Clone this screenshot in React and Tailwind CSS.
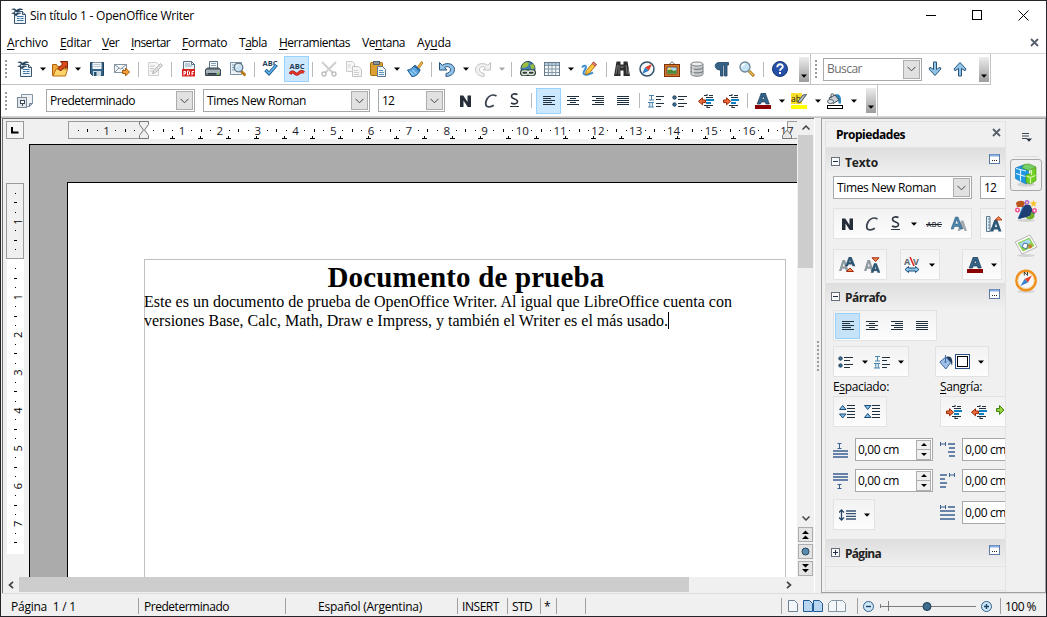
import React, { useLayoutEffect, useRef } from "react";

const UI = "font-['Open_Sans','Noto_Sans',sans-serif] text-[12px] leading-[16px] text-black whitespace-pre";

// Text whose letter spacing is adjusted so that the run is `w` pixels wide.
function T({ w, className = "", children }) {
  const ref = useRef(null);
  useLayoutEffect(() => {
    const el = ref.current;
    el.style.letterSpacing = "0px";
    const n = el.textContent.length;
    el.style.letterSpacing = (w - el.getBoundingClientRect().width) / n + "px";
  }, [w]);
  return (
    <span className="flex shrink-0">
      <span ref={ref} className={`inline-block shrink-0 whitespace-pre ${className}`}>{children}</span>
    </span>
  );
}

const Svg = ({ s = 16, h, children }) => (
  <svg width={s} height={h || s} viewBox={`0 0 ${s} ${h || s}`} className="block shrink-0" fill="none">
    {children}
  </svg>
);

const C = ({ w, children }) => <div className={`flex shrink-0 items-center ${w}`}>{children}</div>;
const Arr = ({ w = "w-3", c = "#000" }) => (
  <C w={w}><Svg s={6} h={4}><path d="M0 0.5h6L3 3.7z" fill={c} /></Svg></C>
);
const Sep = ({ w }) => <C w={w}><div className="h-[15px] w-px bg-[#b9b9b9]" /></C>;
const Grip = ({ w }) => (
  <C w={w}>
    <div className="flex flex-col gap-[2px]">
      {[0, 1, 2, 3, 4].map((i) => <div key={i} className="h-[2px] w-[2px] bg-[#9a9a9a]" />)}
    </div>
  </C>
);
const Drop = () => (
  <div className="flex h-[25px] w-[10px] shrink-0 items-end justify-center bg-linear-to-b from-[#ededed] to-[#9d9d9d] pb-1">
    <Svg s={6} h={4}><path d="M0 0.5h6L3 3.7z" fill="#000" /></Svg>
  </div>
);
const Chevron = () => (
  <div className="flex h-[19px] w-[17px] shrink-0 items-center justify-center border border-[#adadad] bg-[#e1e1e1]">
    <Svg s={9} h={6}><path d="M.5 .8 4.5 4.8 8.5 .8" stroke="#444" /></Svg>
  </div>
);
const Combo = ({ box, text, w, gray }) => (
  <div className={`flex h-[23px] shrink-0 items-center justify-between border border-[#a6a8ab] bg-white pl-[3px] pr-px ${box}`}>
    <T w={w} className={gray ? "text-[#6d6d6d]" : ""}>{text}</T>
    <Chevron />
  </div>
);

/* ---------- icons ---------- */
const NewDoc = () => (
  <Svg>
    <path d="M3.5 3.5h8l3 3v9h-11z" fill="#eef4f8" stroke="#3a566e" />
    <path d="M11.5 3.500v3h3" fill="#c3d4e0" stroke="#3a566e" />
    <path d="M6 8.500h6.500M6 10.500h2.500M9.500 10.500h3M6 12.500h6.500" stroke="#3c78a8" />
    <path d="M0 1.500C2.500-.3 4.500.5 5.500 2 7.500 0 10.500 0 12.500 1.800 10 1.600 7.600 2.500 6 4.800 5 2.800 2.500 1.400 0 1.500z" fill="#27445e" />
    <path d="M0 5.500c2-1.800 3.800-1 4.800.3C6.500 4 9 4.200 10.500 5.600 8.500 5.400 6.600 6.300 5 8.500 4 6.500 2 5.300 0 5.500z" fill="#27445e" />
  </Svg>
);
const Open = () => (
  <Svg>
    <path d="M.5 14.5v-11h4l1 2h8v9z" fill="#f3a93b" stroke="#a95f0c" />
    <path d="M1 15l3-7h11.5l-2 7z" fill="#fbd36b" stroke="#b96e10" />
    <path d="M8.500 .5h7v7l-2.500-2-4.500 4.500-2.500-2.500L10.500 3z" fill="#d94a1c" stroke="#7c2004" />
  </Svg>
);
const Save = () => (
  <Svg>
    <path d="M1.500 1.500h13v13h-11l-2-2z" fill="#33658a" stroke="#1e3f5a" />
    <rect x="3.500" y="1.500" width="9" height="6.500" fill="#f4f8fa" />
    <path d="M4.500 3.500h7M4.500 5.500h7" stroke="#b7c8d4" />
    <rect x="4" y="10" width="8" height="5" fill="#c9d7e0" /><rect x="5" y="11" width="2.500" height="4" fill="#24506f" />
  </Svg>
);
const Mail = () => (
  <Svg>
    <rect x=".5" y="3.5" width="12" height="8" fill="#f5f7f8" stroke="#8496a2" />
    <path d="M1 4l5.500 4L12 4M1 11l4-4M12 11 8 7" stroke="#8496a2" />
    <path d="M8.500 9.500h3v-2.500l4 4-4 4v-2.500h-3z" fill="#f2a033" stroke="#a8590b" />
  </Svg>
);
const Edit = () => (
  <Svg>
    <path d="M1.500 1.500h8l2 2v11h-10z" fill="#f6f6f6" stroke="#cfcfcf" />
    <path d="M3 5h5M3 7.500h4M3 10h3" stroke="#c8c8c8" />
    <path d="M13.500 2.500l2 2-7 7-3 1.200 1-3.200z" fill="#dedede" stroke="#b8b8b8" />
  </Svg>
);
const Pdf = () => (
  <Svg>
    <path d="M2.500 .5h8l3 3v8h-11z" fill="#eef3f6" stroke="#5a7184" />
    <path d="M10.500 .5v3h3" stroke="#5a7184" /><path d="M4 3h5M4 5h7" stroke="#8ba7bd" />
    <rect x="1" y="8" width="13" height="7.5" fill="#d8201d" />
    <path d="M3 14.500v-4.500M3 10.500h1.500v2H3M6.500 10v4h1.200l.8-.8v-2.400l-.8-.8zM11 14.500v-4M11 10.500h2M11 12.500h1.500" stroke="#fff" />
  </Svg>
);
const Print = () => (
  <Svg>
    <path d="M4.500 7.500V.5h8v7" fill="#f7fafc" stroke="#5b7283" />
    <path d="M6 2.500h5M6 4.500h5" stroke="#87a3b8" />
    <path d="M.5 8.500l2-1.500h11l2 1.500v6h-15z" fill="#6c7a85" stroke="#3b4750" />
    <rect x="1" y="9" width="14" height="3" fill="#a8b3ba" /><rect x="3" y="12" width="8" height="1.500" fill="#2d373e" />
    <rect x="12" y="12" width="2" height="1.500" fill="#6ecb3c" />
  </Svg>
);
const Preview = () => (
  <Svg>
    <path d="M.5 1.500h11v12H.5z" fill="#edf2f5" stroke="#7b93a5" />
    <path d="M2 4h3M2 6.500h2M2 9h2" stroke="#7fa0b8" />
    <path d="M11 10l4.500 4.500" stroke="#b97a16" strokeWidth="2.800" />
    <circle cx="8.500" cy="6.500" r="4.300" fill="#c9e0f1" stroke="#5f7485" strokeWidth="1.300" />
    <path d="M6.500 6a2 2 0 0 1 2-2" stroke="#fff" />
  </Svg>
);
const Abc = ({ y = 7 }) => (
  <text x="0.5" y={y} fontSize="7" fontWeight="700" fill="#1f3d55" textLength="15" lengthAdjust="spacingAndGlyphs" fontFamily="Open Sans, sans-serif">ABC</text>
);
const Spell = () => (
  <svg width="17" height="20" viewBox="0 0 17 20" className="mb-1 block shrink-0" fill="none">
    <Abc y={9} />
    <path d="M3.500 13l3.500 3.500 7.500-8.500" stroke="#1d5e96" strokeWidth="3.400" /><path d="M4 13.500l3 2.800 7-7.800" stroke="#62b6ef" strokeWidth="1.600" />
  </svg>
);
const Auto = () => (
  <Svg>
    <Abc y={8} />
    <path d="M1 13q2-3.500 4.500-1t4.500 0 5-.5" stroke="#a81414" strokeWidth="3" /><path d="M1 13q2-3.500 4.500-1t4.500 0 5-.5" stroke="#f03a2a" strokeWidth="1.500" />
  </Svg>
);
const Cut = () => (
  <Svg>
    <path d="M1 1l11 11M15 1L4 12" stroke="#cfcfcf" strokeWidth="2" />
    <circle cx="3" cy="13" r="2" stroke="#bdbdbd" strokeWidth="1.400" /><circle cx="13" cy="13" r="2" stroke="#bdbdbd" strokeWidth="1.400" />
  </Svg>
);
const Copy = () => (
  <Svg>
    <path d="M.5 .5h6l2 2v8h-8z" fill="#f6f6f6" stroke="#cacaca" /><path d="M2 4h3M2 6h2" stroke="#d0d0d0" />
    <path d="M6.500 5.500h6l3 3v7h-9z" fill="#f6f6f6" stroke="#c4c4c4" /><path d="M8 9.500h4M8 11.500h5M8 13.500h5" stroke="#cfcfcf" />
  </Svg>
);
const Paste = () => (
  <Svg>
    <rect x=".5" y="1.500" width="12" height="13" rx="1" fill="#dca032" stroke="#a36a10" />
    <rect x="3.500" y=".5" width="6" height="3" fill="#8c959c" stroke="#56616a" />
    <path d="M7.500 5.500h5l3 3v7h-8z" fill="#eef4f8" stroke="#5b7890" /><path d="M9 9.500h4M9 11.500h5M9 13.500h5" stroke="#5e97c2" />
  </Svg>
);
const Brush = () => (
  <Svg>
    <path d="M10 6.500l4.500-6 1.500 1.300-4 6z" fill="#f1b64b" stroke="#a5690e" strokeWidth=".8" />
    <path d="M.5 9c3 0 5-2.500 7-4.500l5.200 5C11.500 13 9 15.500 5 15.700z" fill="#58a6e2" stroke="#1c588c" />
    <path d="M3 10.500l4 4M5.500 9l4 4" stroke="#d3ebfb" />
    <path d="M7.500 4.500l5.500 5.300" stroke="#2c6494" strokeWidth="2" />
  </Svg>
);
const Undo = ({ a = "#2a5378", b = "#8fc3ea" }) => (
  <Svg>
    <path d="M.5 1.500v7.500h7.500L5.500 6.500c3-1.800 6.200-.5 6 2.300-.2 2.300-2 3.200-4.500 3.700v3c5-.3 8.300-2.700 8.500-7C15.500 3.500 9 .5 3.300 4.300z" fill={b} stroke={a} />
  </Svg>
);
const Redo = () => <div className="-scale-x-100"><Undo a="#c2c2c2" b="#f1f1f1" /></div>;
const Globe = () => (
  <Svg>
    <circle cx="8" cy="7.500" r="7" fill="#3f7fae" stroke="#27455c" />
    <path d="M3 3c2-2 5-2 6-1L8 5 5 6.500 1.500 7zM10 4l3.500-1 1.300 4-3 1.500z" fill="#9dbf3c" />
    <rect x="0" y="8.500" width="16" height="6.500" rx="3" fill="#2d4038" />
    <rect x="1.800" y="10" width="6" height="3.500" rx="1.700" stroke="#e4eadf" strokeWidth="1.300" /><rect x="8.200" y="10" width="6" height="3.500" rx="1.700" stroke="#e4eadf" strokeWidth="1.300" />
  </Svg>
);
const TableI = () => (
  <Svg>
    <rect x=".5" y="1.500" width="15" height="13" fill="#f3f6f8" stroke="#667b8c" />
    <rect x="1" y="2" width="14" height="2" fill="#b4c9d9" />
    <path d="M1 4.500h14M1 8h14M1 11.500h14M4.500 2v12M8 2v12M11.700 2v12" stroke="#8499a8" />
  </Svg>
);
const Pencil = () => (
  <Svg>
    <path d="M1 6.500c2-3 5-2 3.500 1S1 12.500 4 13.500s5-.5 8-2" stroke="#3d8fd2" strokeWidth="2" />
    <path d="M12.500 1l3 2.500-7.500 9-3.500 1 .7-3.700z" fill="#f9c53c" stroke="#a56a12" strokeWidth=".9" />
    <path d="M12.500 1l3 2.500-1.300 1.700-3-2.500z" fill="#e07a7a" stroke="#a03c3c" strokeWidth=".6" />
  </Svg>
);
const Binoc = () => (
  <Svg>
    <path d="M2.500 .5h4v3h3v-3h4L16 15H9.500V9.500h-3V15H0z" fill="#2c2c2c" />
    <path d="M3.500 4L2 13M12 4l1 9M5 4v9M14 8l.7 5" stroke="#777" /><path d="M6.500 6h3" stroke="#999" />
  </Svg>
);
const Compass = () => (
  <Svg>
    <circle cx="8" cy="8" r="7" fill="#f4f7f9" stroke="#35516a" strokeWidth="1.500" />
    <path d="M13 3L9.800 9.800 6.200 6.200z" fill="#e03a22" /><path d="M3 13l3.200-6.800 3.600 3.600z" fill="#2f7fc9" />
  </Svg>
);
const Gallery = () => (
  <Svg>
    <path d="M5 3.500L8 .8l3 2.700" stroke="#6b6b6b" />
    <rect x=".5" y="3.500" width="15" height="12" fill="#d2772c" stroke="#7c3509" />
    <rect x="3" y="6" width="10" height="7" fill="#a9d6ee" stroke="#70370f" strokeWidth=".8" />
    <path d="M3.500 12.500v-3l3-1.500 3 2 3-1v3.500z" fill="#4f8a2a" /><rect x="4" y="7" width="3" height="1.600" fill="#f4e36c" />
  </Svg>
);
const Db = () => (
  <Svg>
    <path d="M2 3v10c0 3 12 3 12 0V3z" fill="#c6c9cb" stroke="#7d8386" /><ellipse cx="8" cy="3" rx="6" ry="2" fill="#eceeef" stroke="#7d8386" />
    <path d="M2 6.500c0 2.500 12 2.500 12 0M2 10c0 2.500 12 2.500 12 0" stroke="#6c7275" /><path d="M4 6v8" stroke="#f1f1f1" />
  </Svg>
);
const Pil = () => (
  <Svg>
    <path d="M5 1.500h9.500V4H13v11h-2.500V4H9v11H6.500V9C-.5 9 0 1.500 5 1.500z" fill="#356286" stroke="#1d4160" strokeWidth=".8" />
  </Svg>
);
const Mag = () => (
  <Svg>
    <path d="M10 10l5 5" stroke="#9a6a14" strokeWidth="3" /><path d="M10.500 10.500l4 4" stroke="#f0bd4a" strokeWidth="1.400" />
    <circle cx="6" cy="6" r="5" fill="#c5e3f6" stroke="#6f8797" strokeWidth="1.300" /><path d="M3 6a3 3 0 0 1 3-3" stroke="#fff" strokeWidth="1.500" />
  </Svg>
);
const Help = () => (
  <Svg>
    <circle cx="8" cy="8" r="7.500" fill="#2450a8" stroke="#183573" />
    <path d="M5.300 6.200c0-4 5.700-3.500 5.500-.4C10.700 7.600 8 7.500 8 9.700M8 11v2" stroke="#fff" strokeWidth="2" />
  </Svg>
);
const ArrowI = ({ up }) => (
  <div className={up ? "rotate-180" : ""}>
    <Svg><path d="M6.500 1h3v7.500l3.500-2.300 1 1.800-6 6.500L2 8l1-1.800 3.500 2.300z" fill="#8fc4e8" stroke="#2a5578" /></Svg>
  </div>
);
const StyleI = () => (
  <Svg>
    <path d="M4.500 1.500h11v9l-3 3h-8z" fill="#eef2f5" stroke="#8496a6" /><path d="M15.500 10.500h-3v3z" fill="#bacad6" stroke="#71869a" />
    <rect x=".5" y="4.500" width="9" height="10" fill="#dfe5ea" stroke="#7b8a97" />
    <rect x="3.500" y="7.500" width="4" height="3" fill="#fff" stroke="#3b4955" /><path d="M5.500 10v3" stroke="#3b4955" />
  </Svg>
);
const Bold = () => <Svg><path d="M3 14V2.500h3.300l4.200 6.500V2.500H14V14h-3.300L6.500 7.500V14z" fill="#252d38" /></Svg>;
const Ital = () => <Svg><path d="M14.500 3C11.500 1.300 7.500 2 5 6c-2.500 4.500-1.500 8 2.500 7.800 1.600 0 3-.7 4.300-1.600" stroke="#3a4350" strokeWidth="1.800" /></Svg>;
const Under = () => (
  <Svg>
    <path d="M11.500 1.500C9 .3 5.500 .8 5.500 3.300c0 3.200 6 2.200 6 5.200 0 2.500-3.500 3-6.500 1.500" stroke="#2c3541" strokeWidth="1.600" />
    <path d="M4 13.500h9" stroke="#2c3541" />
  </Svg>
);
const alignRows = {
  l: [[0, 12], [0, 8], [0, 12], [0, 9], [0, 12]],
  c: [[0, 12], [3, 9], [0, 12], [3, 9], [0, 12]],
  r: [[0, 12], [4, 12], [0, 12], [3, 12], [0, 12]],
  j: [[0, 12], [0, 12], [0, 12], [0, 12], [0, 12]],
};
const Align = ({ k }) => (
  <Svg s={12} h={10}>{alignRows[k].map(([a, b], i) => <path key={i} d={`M${a} ${i * 2 + 0.5}H${b}`} stroke="#20303c" />)}</Svg>
);
const NumL = () => (
  <Svg>
    <path d="M1 2.500h5M3.500 3v4M1 7h5M0 9.500h6M1.800 10v4M4.300 10v4M0 14h6" stroke="#4b84ad" />
    <path d="M8 3.500h8M8 6.500h5M8 10.500h8M8 13.500h5" stroke="#20303c" />
  </Svg>
);
const BulL = () => (
  <Svg>
    <circle cx="2.500" cy="4.500" r="1.700" fill="#3c7199" stroke="#1d3e58" /><circle cx="2.500" cy="11.500" r="1.700" fill="#3c7199" stroke="#1d3e58" />
    <path d="M6 3.500h9M6 6.500h6M6 10.500h9M6 13.500h6" stroke="#20303c" />
  </Svg>
);
const Ind = ({ left }) => (
  <Svg>
    <path d="M6 2.500h3M11 2.500h4M8 4.500h7M6 12.500h9M9 14.500h3M9 1v2M9 13v2" stroke="#20303c" />
    <path d="M8 7h8M8 10h5" stroke="#0e7fc0" strokeWidth="2" />
    <g transform={left ? "translate(8 0) scale(-1 1)" : ""}>
      <path d="M.5 7h3V4.800L7.500 8.300l-4 3.500V9.600h-3z" fill="#ef6b35" stroke="#96280b" />
    </g>
  </Svg>
);
const FontColor = () => (
  <Svg>
    <path d="M6.300 0h4l4 11h-3.300l-.7-2H6.200l-.7 2H2.200zM6.900 6.500h2.700L8.300 2.800z" fill="#33658b" stroke="#1c3a52" strokeWidth=".7" />
    <rect x="0" y="12" width="16" height="4" fill="#8b0000" />
  </Svg>
);
const Hilite = () => (
  <Svg>
    <rect width="11" height="11" fill="#f7df2a" />
    <text x="0" y="9" fontSize="8.500" fill="#111" fontFamily="Open Sans, sans-serif">ab</text>
    <path d="M15.500 1.500L10 9l-3 1 .5-2.500L12 2z" fill="#b0b8bd" stroke="#4c5860" /><path d="M6 9.500l3 .5-2 1.500z" fill="#e2aa23" />
    <rect y="12" width="16" height="4" fill="#ff0" />
  </Svg>
);
const Fill = () => (
  <Svg>
    <path d="M8 1.500c4.500-1 6.500 1 6 9h-2.500c0-4-1-5-3-5z" fill="#2c84b8" />
    <path d="M2 5l6-3 4 5-6 3.500z" fill="#c8d0d5" stroke="#3d4a54" /><path d="M4 5V1.500C5 0 7 1 7 2.500" stroke="#3d4a54" /><ellipse cx="3.500" cy="8.500" rx="3" ry="2" fill="#dbe2e6" stroke="#55626b" />
    <rect x=".5" y="12.500" width="15" height="3" fill="#fff" stroke="#000" />
  </Svg>
);
const Bucket = () => (
  <Svg>
    <path d="M6.500 3c5-2 8 1 6.500 9-.5-3-2-4.500-4-5z" fill="#1f3b58" />
    <path d="M.8 8l6-5 5 5.500-5 6.500z" fill="#9fc0e8" stroke="#3f6ca3" /><path d="M6.500 8V1" stroke="#3f6ca3" /><circle cx="6.500" cy="8" r="1" fill="#3f6ca3" />
  </Svg>
);
const TwoA = ({ red }) => (
  <Svg>
    <path d="M0 14L3.500 3H6l3.500 11H7l-.7-2.300H3.200L2.500 14zM3.800 9.600h2L4.800 6z" fill="#8f9aa1" />
    {red === "up" && <><path d="M6.500 9L10 0h2.300L16 9h-2.300l-.6-1.800h-3.700L8.800 9zM10 5.500h2L11 2.500z" fill="#2d5877" stroke="#1c3a52" strokeWidth=".4" /><path d="M7.500 14.500L11 11l3.500 3.500z" fill="#f08a4a" stroke="#a6290b" /></>}
    {red === "dn" && <><path d="M7 15.500l3.200-9h2.300l3.500 9h-2.300l-.6-1.800h-3.200l-.6 1.800zM10.500 12h2l-1-3z" fill="#2d5877" stroke="#1c3a52" strokeWidth=".4" /><path d="M8 .8h7L11.500 4.500z" fill="#f08a4a" stroke="#a6290b" /></>}
  </Svg>
);
const Shadow = () => (
  <Svg>
    <path d="M6.500 15L10 4.500h2.500L16 15h-2.500l-.7-2h-3L9 15z" fill="#a5adb2" />
    <path d="M0 13L4.500 1H7l4.500 12H9L8.300 10.500H3.200L2.500 13zM4 8h3.500L5.700 3.500z" fill="#4a86ad" stroke="#265374" strokeWidth=".5" />
  </Svg>
);
const Strike = () => (
  <Svg><text x="0.5" y="11" fontSize="7" fontWeight="600" fill="#3a444d" textLength="15" lengthAdjust="spacingAndGlyphs" fontFamily="Open Sans, sans-serif">ABC</text><path d="M0 8.500h16" stroke="#222" /></Svg>
);
const RulerA = () => (
  <Svg>
    <path d="M.5 .5h3.500v15H.5z" fill="#e3eef6" stroke="#5a7b94" /><path d="M2 3h2M2 6h2M2 9h2M2 12h2" stroke="#5a7b94" />
    <path d="M4 15.500L8.300 4h3L15.500 15.500h-3l-.6-2H8l-.7 2zM8.900 11h2.200L10 7.500z" fill="#2d5877" /><path d="M9 4L12.500 .5 16 4z" fill="#f08a4a" stroke="#a6290b" strokeWidth=".8" />
  </Svg>
);
const Kern = () => (
  <Svg>
    <text x="0" y="8" fontSize="9" fontWeight="700" fill="#59666f" fontFamily="Open Sans, sans-serif">A</text><text x="9" y="8" fontSize="9" fontWeight="700" fill="#59666f" fontFamily="Open Sans, sans-serif">V</text>
    <path d="M6 0l4 9" stroke="#d22" strokeWidth="1.500" />
    <path d="M1 12.500L4.500 9.500V11h7V9.500l3.500 3-3.500 3V14h-7v1.500z" fill="#8cc4ea" stroke="#1d4e78" />
  </Svg>
);
const ParaSp = ({ inn }) => (
  <Svg>
    <path d="M8 1.500h8M8 4.500h8M8 7.500h8M8 10.500h8M8 13.500h8" stroke="#20303c" />
    {inn ? <path d="M.5 1.500h6.500L3.700 5.500zM.5 13.500h6.500L3.700 9.500z" fill="#7fbce8" stroke="#1d4e78" /> : <path d="M.5 5.500h6.500L3.700 1.500zM.5 10h6.500L3.700 14z" fill="#7fbce8" stroke="#1d4e78" />}
  </Svg>
);
const GreenA = () => <Svg s={9} h={16}><path d="M.5 4.500h3v-3L8 6l-4.500 4.500v-3h-3z" fill="#9bd13c" stroke="#3c8512" /></Svg>;
const SpTop = () => <Svg><path d="M4.500 1.500h4M6.500 2v5M4.500 6.500h4" stroke="#3a5f91" /><path d="M0 9h15M0 12h15M0 15h15" stroke="#3a5f91" strokeWidth="1.600" /></Svg>;
const SpBot = () => <Svg><path d="M4.500 11.500h4M6.500 11v5M4.500 15.500h4" stroke="#3a5f91" /><path d="M0 1h15M0 4h15M0 7h15" stroke="#3a5f91" strokeWidth="1.600" /></Svg>;
const IndL = () => <Svg><path d="M.5 0v4M5.500 0v4M.5 2h5" stroke="#3a5f91" /><path d="M8 2h7M9 6h6M8 10h7M9 14h6" stroke="#3a5f91" strokeWidth="1.700" /></Svg>;
const IndR = () => <Svg><path d="M9.500 0v4M14.500 0v4M9.500 2h5" stroke="#3a5f91" /><path d="M0 2h7M0 6h5M0 10h7M0 14h6" stroke="#3a5f91" strokeWidth="1.700" /></Svg>;
const IndF = () => <Svg><path d="M.5 0v4M5.500 0v4M.5 2h5" stroke="#3a5f91" /><path d="M8 2h7M0 6h15M0 10h15M0 14h15" stroke="#3a5f91" strokeWidth="1.700" /></Svg>;
const LineSp = () => <Svg s={17} h={12}><path d="M2.500 1v10M0 3.500L2.500 1 5 3.500M0 8.500L2.500 11 5 8.500" stroke="#27486b" strokeWidth="1.300" /><path d="M7 2h10M7 4.700h10M7 7.400h10M7 10h10" stroke="#3a5374" strokeWidth="1.300" /></Svg>;
const CloseX = () => <Svg s={9}><path d="M1 1l7 7M8 1L1 8" stroke="#55606a" strokeWidth="1.800" /></Svg>;

/* ---------- toolbars ---------- */
const menus = [
  ["A", "rchivo", 41, "w-[53px]"], ["E", "ditar", 31, "w-[42px]"], ["V", "er", 17, "w-[29px]"], ["I", "nsertar", 39, "w-[51px]"],
  ["F", "ormato", 45, "w-[57px]"], ["T", "_abla", 28, "w-[40px]"], ["H", "erramientas", 71, "w-[83px]"], ["Ve", "_ntana", 43, "w-[55px]"], ["Ay", "_uda", 34, "w-[40px]"],
];
const MenuLabel = ({ a, b }) => {
  const i = b.indexOf("_");
  if (i < 0) return <><u className="underline-offset-2">{a}</u>{b}</>;
  return <>{a}<u className="underline-offset-2">{b[i + 1]}</u>{b.slice(i + 2)}</>;
};

const Toolbar1 = () => (
  <div className="flex h-[31px] w-[990px] items-center border-b border-r border-[#c3c3c3] pl-1">
    <Grip w="w-3" /><C w="w-[23px]"><NewDoc /></C><Arr /><C w="w-[23px]"><Open /></C><Arr w="w-[14px]" />
    <C w="w-[25px]"><Save /></C><C w="w-6"><Mail /></C><Sep w="w-[9px]" /><C w="w-6"><Edit /></C><Sep w="w-[10px]" />
    <C w="w-6"><Pdf /></C><C w="w-[25px]"><Print /></C><C w="w-6"><Preview /></C><Sep w="w-2" /><C w="w-[22px]"><Spell /></C>
    <C w="w-7"><div className="flex h-[26px] w-[25px] items-center justify-center border border-[#99d1ff] bg-[#cce8ff]"><Auto /></div></C>
    <Sep w="w-[9px]" /><C w="w-[25px]"><Cut /></C><C w="w-6"><Copy /></C><C w="w-6"><Paste /></C><Arr w="w-[13px]" /><C w="w-6"><Brush /></C>
    <Sep w="w-2" /><C w="w-6"><Undo /></C><Arr /><C w="w-6"><Redo /></C><Arr c="#a5a5a5" /><Sep w="w-[9px]" />
    <C w="w-6"><Globe /></C><C w="w-6"><TableI /></C><Arr w="w-[13px]" /><C w="w-[25px]"><Pencil /></C><Sep w="w-2" />
    <C w="w-[25px]"><Binoc /></C><C w="w-[25px]"><Compass /></C><C w="w-[25px]"><Gallery /></C><C w="w-[25px]"><Db /></C><C w="w-[25px]"><Pil /></C><C w="w-6"><Mag /></C>
    <Sep w="w-[9px]" /><C w="w-[27px]"><Help /></C><Drop />
    <div className="ml-px h-[31px] w-[5px] shrink-0 border-l border-[#c3c3c3]" />
    <Grip w="w-2" /><C w="w-[104px]"><Combo box="w-[99px]" text="Buscar" w={35} gray /></C>
    <C w="w-[25px]"><ArrowI /></C><C w="w-[27px]"><ArrowI up /></C><Drop />
  </div>
);

const Toolbar2 = () => (
  <div className="flex h-[31px] w-[877px] items-center border-r border-[#c3c3c3] pl-1">
    <Grip w="w-3" /><C w="w-[29px]"><StyleI /></C>
    <C w="w-[157px]"><Combo box="w-[149px]" text="Predeterminado" w={85} /></C>
    <C w="w-[175px]"><Combo box="w-[167px]" text="Times New Roman" w={99} /></C>
    <C w="w-[79px]"><Combo box="w-[67px]" text="12" w={12} /></C>
    <C w="w-[25px]"><Bold /></C><C w="w-6"><Ital /></C><C w="w-[25px]"><Under /></C><Sep w="w-[5px]" />
    <C w="w-[31px]"><div className="flex h-[26px] w-[25px] items-center justify-center border border-[#99d1ff] bg-[#cce8ff]"><Align k="l" /></div></C>
    <C w="w-[25px]"><Align k="c" /></C><C w="w-[25px]"><Align k="r" /></C><C w="w-[22px]"><Align k="j" /></C><Sep w="w-[9px]" />
    <C w="w-6"><NumL /></C><C w="w-[26px]"><BulL /></C><C w="w-[25px]"><Ind left /></C><C w="w-6"><Ind /></C><Sep w="w-2" />
    <C w="w-6"><FontColor /></C><Arr /><C w="w-6"><Hilite /></C><Arr /><C w="w-6"><Fill /></C><Arr w="w-[15px]" /><Drop />
  </div>
);

/* ---------- rulers ---------- */
const CM = 37.8;
const seq = (n) => Array.from({ length: n }, (_, i) => i);
const HRuler = () => (
  <svg width="729" height="19" viewBox="68 120 729 19" className="block shrink-0">
    <rect x="68" y="122" width="729" height="17" fill="#fff" />
    <rect x="68.5" y="121.5" width="76" height="17" fill="#f0f0f0" stroke="#9a9a9a" />
    <path d="M797 121.5h-9.500v17h9.500" fill="#f0f0f0" stroke="#9a9a9a" />
    {seq(76).map((i) => {
      const q = i - 7;
      if (q % 4 === 0) return null;
      const half = q % 2 === 0;
      return <rect key={i} x={Math.floor(144.3 + (q * CM) / 4)} y={half ? 129 : 130} width="1" height={half ? 3 : 1} fill="#000" />;
    })}
    {[-1, ...seq(17).map((i) => i + 1)].map((n) => (
      <text key={n} x={144.3 + n * CM} y="135" textAnchor="middle" fontSize="11.5" fontFamily="Open Sans, Noto Sans, sans-serif" fill="#1a1a2a">{Math.abs(n)}</text>
    ))}
    {seq(22).map((i) => {
      const x = Math.floor(172.3 + i * 28.05);
      return <path key={i} d={`M${x - 2} 138.5h5M${x + 0.5} 136v2`} stroke="#000" />;
    })}
    <path d="M139.5 121.5h9v3l-4 5.500 4 5.500v3h-9v-3l4-5.500-4-5.500z" fill="#f0f0f0" stroke="#777" />
    <path d="M782.5 138.5h9v-3l-4.500-5.500-4.500 5.500z" fill="#e8e8e8" stroke="#777" />
  </svg>
);
const VRuler = () => (
  <svg width="18" height="371" viewBox="6 183 18 371" className="block">
    <rect x="7" y="259" width="17" height="295" fill="#fff" />
    <rect x="6.5" y="183.5" width="17" height="75" fill="#f0f0f0" stroke="#9a9a9a" />
    {seq(38).map((i) => {
      const q = i - 7;
      if (q % 4 === 0) return null;
      const half = q % 2 === 0;
      return <rect key={i} x={half ? 14 : 15} y={Math.floor(259.3 + (q * CM) / 4)} width={half ? 3 : 1} height="1" fill="#000" />;
    })}
    {[-1, 1, 2, 3, 4, 5, 6, 7].map((n) => (
      <text key={n} transform={`translate(22 ${259.3 + n * CM}) rotate(-90)`} textAnchor="middle" fontSize="11" fontFamily="Open Sans, Noto Sans, sans-serif" fill="#000">{Math.abs(n)}</text>
    ))}
  </svg>
);

/* ---------- sidebar ---------- */
const Header = ({ text, w, plus }) => (
  <div className="flex h-[27px] shrink-0 items-center bg-linear-to-b from-[#dedede] to-[#f0f0f0] pl-[5px]">
    <Svg s={9}><rect x=".5" y=".5" width="8" height="8" fill="#fafafa" stroke="#66707c" /><path d={plus ? "M2 4.500h5M4.500 2v5" : "M2 4.500h5"} stroke="#1e2d48" /></Svg>
    <div className="w-[149px] pl-[5px] pt-[3px]"><T w={w} className="font-bold text-[#222]">{text}</T></div>
    <div className="pb-[6px]"><Svg s={11} h={10}><rect x=".5" y=".5" width="10" height="9" fill="#fff" stroke="#5b7ba6" /><path d="M1 1.500h9" stroke="#86aee0" strokeWidth="2" /><path d="M3 6.500h1M5 6.500h1M7 6.500h1" stroke="#222" /></Svg></div>
  </div>
);
const Box = ({ w, children }) => (
  <div className={`flex h-[31px] shrink-0 items-center border border-[#e2e2e2] bg-linear-to-b from-[#f2f2f2] to-[#fdfdfd] ${w}`}>{children}</div>
);
const Spin = () => (
  <div className="flex h-[23px] w-[78px] shrink-0 items-center justify-between border border-[#a6a8ab] bg-white pl-[2px] pr-px">
    <T w={41}>0,00 cm</T>
    <div className="flex w-[15px] flex-col">
      <div className="flex h-[10px] items-center justify-center border border-[#adadad] bg-[#efefef]"><Svg s={6} h={3}><path d="M0 3h6L3 0z" fill="#000" /></Svg></div>
      <div className="flex h-[10px] items-center justify-center border border-t-0 border-[#adadad] bg-[#efefef]"><Svg s={6} h={3}><path d="M0 0h6L3 3z" fill="#000" /></Svg></div>
    </div>
  </div>
);

const Deck = () => (
  <div className="flex w-[181px] shrink-0 flex-col overflow-hidden border-l border-t border-r border-[#e3e3e3] bg-[#f0f0f0]">
    <div className="flex h-[26px] shrink-0 items-center justify-between border-b border-[#e3e3e3] pl-[10px] pr-1">
      <T w={69} className="font-bold">Propiedades</T>
      <div className="pb-1"><CloseX /></div>
    </div>
    <Header text="Texto" w={33} />
    <div className="flex flex-col pl-[7px]">
      <div className="flex gap-2 pt-px">
        <Combo box="w-[139px]" text="Times New Roman" w={99} />
        <Combo box="w-[60px]" text="12" w={12} />
      </div>
      <div className="mt-[9px] flex gap-2">
        <Box w="w-[139px] pl-[5px]"><C w="w-6"><Bold /></C><C w="w-6"><Ital /></C><C w="w-6"><Under /></C><Arr w="w-[15px]" /><C w="w-[25px]"><Strike /></C><Shadow /></Box>
        <Box w="w-10 pl-[5px]"><RulerA /></Box>
      </div>
      <div className="mt-[10px] flex">
        <Box w="w-[54px] pl-[5px] mr-[13px]"><C w="w-[25px]"><TwoA red="up" /></C><TwoA red="dn" /></Box>
        <Box w="w-10 pl-[3px] mr-[22px]"><C w="w-[25px]"><Kern /></C><Arr /></Box>
        <Box w="w-10 pl-1"><C w="w-6"><FontColor /></C><Arr w="w-[6px]" /></Box>
      </div>
    </div>
    <div className="h-[3px] shrink-0" />
    <Header text="Párrafo" w={41} />
    <div className="flex flex-col pl-[7px]">
      <Box w="w-[104px] pl-px">
        <div className="mr-[6px] flex h-[26px] w-[25px] shrink-0 items-center justify-center border border-[#99d1ff] bg-[#c5e2f7]"><Align k="l" /></div>
        <C w="w-[25px]"><Align k="c" /></C><C w="w-[25px]"><Align k="r" /></C><Align k="j" />
      </Box>
      <div className="mt-[5px] flex">
        <Box w="w-[76px] pl-1 mr-[26px]"><C w="w-6"><BulL /></C><Arr /><C w="w-6"><NumL /></C><Arr w="w-[6px]" /></Box>
        <Box w="w-[54px] pl-[3px]"><Bucket /><C w="w-[23px]"><Svg><rect x=".5" y=".5" width="14" height="14" fill="#fff" stroke="#2c4f86" /><rect x="2.500" y="2.500" width="10" height="10" fill="#fff" stroke="#000" /></Svg></C><Arr w="w-[6px]" /></Box>
      </div>
      <div className="flex h-[19px] items-center pt-px">
        <div className="w-[107px]"><T w={56}>E<u className="underline-offset-2">s</u>paciado:</T></div>
        <T w={42}><u className="underline-offset-2">S</u>angría:</T>
      </div>
      <div className="flex">
        <Box w="w-[54px] pl-[5px] mr-[53px]"><C w="w-[25px]"><ParaSp /></C><ParaSp inn /></Box>
        <Box w="w-[90px] pl-[5px]"><C w="w-[25px]"><Ind /></C><C w="w-[25px]"><Ind left /></C><GreenA /></Box>
      </div>
      <div className="mt-[11px] flex items-center"><C w="w-[22px]"><SpTop /></C><Spin /><C w="w-[29px] pl-[7px]"><IndL /></C><Spin /></div>
      <div className="mt-2 flex items-center"><C w="w-[22px]"><SpBot /></C><Spin /><C w="w-[29px] pl-[7px]"><IndR /></C><Spin /></div>
      <div className="mt-[7px] flex">
        <Box w="w-[42px] pl-[5px] mr-[65px]"><C w="w-[25px]"><LineSp /></C><Arr w="w-[6px]" /></Box>
        <div className="mt-[2px] flex h-[23px] items-center"><C w="w-[22px]"><IndF /></C><Spin /></div>
      </div>
    </div>
    <div className="h-[9px] shrink-0" />
    <Header text="Página" w={36} plus />
    <div className="h-[25px] shrink-0 border-y border-[#e3e3e3]" />
  </div>
);

const Tabs = () => (
  <div className="flex w-10 shrink-0 flex-col items-center">
    <div className="flex h-[35px] w-full shrink-0 items-center justify-center pb-1">
      <Svg s={11} h={10}><path d="M1 1.500h7M1 4h7M1 6.500h5" stroke="#3b4855" /><path d="M5 6.500h6L8 9.700z" fill="#24303c" /></Svg>
    </div>
    <div className="mb-[2px] h-px w-[23px] shrink-0 bg-[#dcdcdc]" />
    <div className="flex h-8 w-8 shrink-0 items-center justify-center rounded-[3px] border border-[#a9a9a9]">
      <Svg s={24}>
        <ellipse cx="12" cy="21.500" rx="9" ry="2" fill="#d3d3d3" />
        <path d="M1.500 5l8-3 5 2v14l-2 3-6-2.500-5-3z" fill="#1f97e0" stroke="#0b6fb4" strokeWidth=".6" />
        <path d="M2 10.500l9.500 3M6.500 6.500v12M2 5.500l10 2.500" stroke="#d6effc" strokeWidth="1.200" />
        <path d="M10 1.500l5-.5 7 3-7.500 3.500L8 5z" fill="#79d06a" stroke="#3f930c" strokeWidth=".6" />
        <path d="M12 12l5-1.500V7l5-2.500v13L16.500 21 12 19.500z" fill="#6fd022" stroke="#3f930c" strokeWidth=".6" />
        <path d="M12.500 13l4 1.500v6M16.500 14.500l5-2M17.500 7v5" stroke="#d5f7a8" strokeWidth="1.200" />
      </Svg>
    </div>
    <div className="mt-2 flex flex-col gap-[11px]">
      <Svg s={24}>
        <ellipse cx="12" cy="21.500" rx="9" ry="1.500" fill="#d3d3d3" />
        <path d="M9 6l7 7-10 7-2-1z" fill="#2f76bd" /><path d="M4 20l9-2 8-3-5-9-5-.5z" fill="#1c3f74" />
        <path d="M2 4c2-3 8-3 9 0l-2 4H3z" fill="#b9561c" /><path d="M17 13c4 1 5 5 1 7-3 1-6 0-6-2 3 0 5-1 5-5z" fill="#72ad2a" />
        <path d="M19.500 1l1 2.300 2.500.2-1.800 1.800.6 2.500-2.300-1.300L17.200 8l.6-2.700L16 3.500l2.500-.2z" fill="#f7c52d" />
        <circle cx="13" cy="3.500" r="2.400" fill="#b067df" /><circle cx="3.500" cy="11" r="2.500" fill="#ef5796" /><circle cx="20.500" cy="11.500" r="2.500" fill="#ef5796" /><circle cx="13" cy="3.500" r=".9" fill="#ffe76b" /><circle cx="3.500" cy="11" r=".9" fill="#fff" /><circle cx="20.500" cy="11.500" r=".9" fill="#fff" />
      </Svg>
      <Svg s={24}>
        <ellipse cx="12" cy="21.500" rx="9" ry="1.500" fill="#d3d3d3" />
        <path d="M1 8L16 1l7 12L8 20z" fill="#fff" stroke="#b5b5b5" /><path d="M3.500 9l12-5.500L20.500 12 9 17.500z" fill="#8bcf4a" />
        <path d="M5 9.500l10-4.500 2 3.500-9.500 4.500z" fill="#a9dbf5" /><path d="M10 9l4 1-1.500 5-4.500-2z" fill="#fff" stroke="#4576a2" strokeWidth="1" /><circle cx="16" cy="12.500" r="2" fill="#ca7b2d" />
      </Svg>
      <Svg s={24}>
        <ellipse cx="12" cy="22.500" rx="9" ry="1.500" fill="#d3d3d3" />
        <circle cx="12" cy="11.500" r="9.700" fill="#f6f8fa" stroke="#ef8f1c" strokeWidth="2.400" /><circle cx="12" cy="11.500" r="8" stroke="#f8cf8a" strokeWidth=".8" />
        <path d="M18 6.500L14 13.500 10.500 10z" fill="#e2452c" /><path d="M6.500 17L10.500 10l3.500 3.500z" fill="#3a82cc" /><path d="M10.300 6.500V3l3.200 3.500V3" stroke="#333" strokeWidth=".9" />
      </Svg>
    </div>
  </div>
);

/* ---------- status bar ---------- */
const SSep = ({ w }) => <C w={w}><div className="h-4 w-px bg-[#a0a0a0]" /></C>;
const Page = ({ on }) => <path d="M.5 .5h6l3 3v8h-9z" fill={on ? "#b8d5ef" : "#f4f7f9"} stroke={on ? "#205a97" : "#6c8193"} />;
const ZoomB = ({ plus }) => <Svg s={11}><circle cx="5.500" cy="5.500" r="5" fill="#cfe6f6" stroke="#2f618c" /><path d={plus ? "M3 5.500h5M5.500 3v5" : "M3 5.500h5"} stroke="#1b456b" strokeWidth="1.400" /></Svg>;

const Status = () => (
  <div className="flex h-[22px] shrink-0 items-center bg-[#f0f0f0] pl-[10px] pt-[2px]">
    <C w="w-[127px] pt-px"><T w={65}>Página  1 / 1</T></C><SSep w="w-[6px]" />
    <C w="w-[141px] pt-px"><T w={85}>Predeterminado</T></C><SSep w="w-[33px]" />
    <C w="w-[139px] pt-px"><T w={104}>Español (Argentina)</T></C><SSep w="w-[5px]" />
    <C w="w-[45px] pt-px"><T w={37}>INSERT</T></C><SSep w="w-[5px]" />
    <C w="w-7 pt-px"><T w={20}>STD</T></C><SSep w="w-1" />
    <C w="w-[12px] pt-px"><T w={5}>*</T></C><SSep w="w-[29px]" /><SSep w="w-[196px]" /><SSep w="w-[7px]" />
    <C w="w-[15px]"><Svg s={10} h={12}><Page /></Svg></C>
    <C w="w-[25px]"><Svg s={10} h={12}><Page on /></Svg><Svg s={10} h={12}><Page on /></Svg></C>
    <C w="w-[29px]"><Svg s={18} h={12}><path d="M.5 11.500v-8l3-3h5v11zM8.500 .5h6l3 3v8h-9z" fill="#f4f7f9" stroke="#8496a2" /></Svg></C>
    <SSep w="w-[6px]" /><C w="w-[17px]"><ZoomB /></C>
    <C w="w-[101px]"><Svg s={98} h={13}><path d="M.5 4v4M0 6.500h96M8.500 1v10" stroke="#7c7c7c" /><circle cx="47" cy="6.500" r="4" fill="#3e6d8e" stroke="#1e3b50" /></Svg></C>
    <C w="w-[19px]"><ZoomB plus /></C><SSep w="w-[5px]" /><div className="pt-px"><T w={31}>100 %</T></div>
  </div>
);

const NavBtn = ({ children }) => <div className="flex h-[15px] w-[15px] items-center justify-center border border-[#adadad] bg-[#e4e4e4]">{children}</div>;

export default function App() {
  return (
    <div className={`flex h-[617px] w-[1047px] flex-col overflow-hidden border border-[#24242a] bg-white ${UI}`}>
      <div className="flex h-[29px] shrink-0 items-center justify-between pl-[10px] pr-[17px]">
        <div className="flex items-center gap-[3px]"><NewDoc /><T w={164}>Sin título 1 - OpenOffice Writer</T></div>
        <div className="flex items-center gap-[35px]">
          <Svg s={11}><path d="M0 5.500h10" stroke="#000" /></Svg>
          <Svg s={11}><rect x=".5" y=".5" width="9" height="9" stroke="#000" /></Svg>
          <Svg s={11}><path d="M.5 .5l10 10M10.500 .5l-10 10" stroke="#000" /></Svg>
        </div>
      </div>
      <div className="flex h-6 shrink-0 items-center border-b border-[#d8d8d8] pl-[6px] pr-[7px] pt-[2px]">
        {menus.map(([a, b, w, c]) => <C key={a} w={c}><T w={w}><MenuLabel a={a} b={b} /></T></C>)}
        <div className="ml-auto pb-px"><CloseX /></div>
      </div>
      <Toolbar1 />
      <Toolbar2 />
      <div className="h-[2px] shrink-0 border-t border-[#d6d6d6] bg-[#c3c3c3]" />
      <div className="flex h-[476px] shrink-0 border-b border-[#dcdcdc] bg-[#f0f0f0] pl-px">
        <div className="flex w-[812px] shrink-0 flex-col border-l border-t border-[#6f6f6f]">
          <div className="flex h-[458px] shrink-0">
            <div className="flex w-[794px] shrink-0 flex-col">
              <div className="flex h-[25px] shrink-0 items-start pl-[3px] pt-px">
                <div className="mt-px flex h-[18px] w-[18px] items-center justify-center border border-[#9a9a9a] bg-[#f4f4f4]"><Svg s={8} h={7}><path d="M1 0v5.500h6.500" stroke="#000" strokeWidth="2" /></Svg></div>
                <div className="ml-11"><HRuler /></div>
              </div>
              <div className="flex min-h-0 flex-1">
                <div className="w-[26px] shrink-0 pl-[3px] pt-[39px]"><VRuler /></div>
                <div className="flex flex-1 overflow-hidden border-l border-t border-black bg-[#ababab] pl-[37px] pt-[37px]">
                  <div className="flex-1 border-l border-t border-black bg-white pl-[76px] pt-[76px]">
                    <div className="h-[400px] w-[642px] border border-[#c0c0c0] font-['Liberation_Serif',serif]">
                      <div className="flex h-[32px] items-center justify-center pl-[2px] pt-[2px]"><T w={277} className="text-[29px] leading-[32px] font-bold">Documento de prueba</T></div>
                      <div className="-ml-px flex flex-col text-[16px] leading-[19px]">
                        <T w={588}>Este es un documento de prueba de OpenOffice Writer. Al igual que LibreOffice cuenta con</T>
                        <div className="flex"><T w={524}>versiones Base, Calc, Math, Draw e Impress, y también el Writer es el más usado.</T><div className="mt-px h-[17px] w-px bg-black" /></div>
                      </div>
                    </div>
                  </div>
                </div>
              </div>
            </div>
            <div className="flex w-[17px] flex-col items-center bg-[#f0f0f0] pb-px pt-[6px]">
              <Svg s={8} h={5}><path d="M.5 4.500L4 1l3.500 3.500" stroke="#444" strokeWidth="1.500" /></Svg>
              <div className="mt-[5px] h-[133px] w-[15px] shrink-0 bg-[#cdcdcd]" />
              <div className="flex flex-1 items-end pb-[6px]"><Svg s={8} h={5}><path d="M.5 .5L4 4 7.500 .5" stroke="#444" strokeWidth="1.500" /></Svg></div>
              <div className="flex flex-col gap-[2px]">
                <NavBtn><Svg s={7} h={9}><path d="M0 4h7L3.500 .5zM0 9h7L3.500 5.500z" fill="#000" /></Svg></NavBtn>
                <NavBtn><Svg s={9}><circle cx="4.500" cy="4.500" r="3.500" fill="#5a8aac" stroke="#27485f" /></Svg></NavBtn>
                <NavBtn><Svg s={7} h={9}><path d="M0 0h7L3.500 3.500zM0 5h7L3.500 8.500z" fill="#000" /></Svg></NavBtn>
              </div>
            </div>
          </div>
          <div className="flex h-[15px] items-center pl-[5px]">
            <Svg s={6} h={8}><path d="M5 .8L1.500 4 5 7.200" stroke="#444" strokeWidth="1.700" /></Svg>
            <div className="ml-[5px] h-[15px] w-[670px] bg-[#cdcdcd]" />
            <div className="ml-[97px]"><Svg s={6} h={8}><path d="M1 .8L4.500 4 1 7.200" stroke="#444" strokeWidth="1.700" /></Svg></div>
          </div>
        </div>
        <div className="flex w-[7px] shrink-0 items-center justify-center border-l border-white">
          <div className="flex flex-col gap-[2px]">{seq(8).map((i) => <div key={i} className="h-[2px] w-[2px] bg-[#9c9c9c]" />)}</div>
        </div>
        <div className="flex w-[225px] shrink-0 border border-[#a0a0a0] pl-[3px] pt-[2px]">
          <Deck /><Tabs />
        </div>
      </div>
      <Status />
    </div>
  );
}
